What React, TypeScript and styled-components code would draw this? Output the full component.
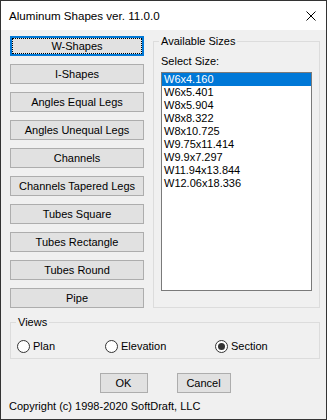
import React, { useState } from "react";
import styled, { createGlobalStyle } from "styled-components";

const GlobalStyle = createGlobalStyle`
  html, body {
    margin: 0;
    padding: 0;
    background: #ffffff;
  }
  * {
    box-sizing: border-box;
  }
`;

const SHAPES = [
  "W-Shapes",
  "I-Shapes",
  "Angles Equal Legs",
  "Angles Unequal Legs",
  "Channels",
  "Channels Tapered Legs",
  "Tubes Square",
  "Tubes Rectangle",
  "Tubes Round",
  "Pipe",
];

const SIZES = [
  "W6x4.160",
  "W6x5.401",
  "W8x5.904",
  "W8x8.322",
  "W8x10.725",
  "W9.75x11.414",
  "W9.9x7.297",
  "W11.94x13.844",
  "W12.06x18.336",
];

const VIEWS = [
  { label: "Plan", width: 88 },
  { label: "Elevation", width: 110 },
  { label: "Section", width: 80 },
];

const Window = styled.div`
  width: 327px;
  height: 420px;
  border: 1px solid #333333;
  display: flex;
  flex-direction: column;
  font-family: "Liberation Sans", Arial, sans-serif;
  font-size: 11px;
  line-height: 13px;
  color: #000000;
`;

const TitleBar = styled.div`
  height: 29px;
  background: #ffffff;
  display: flex;
  align-items: center;
  justify-content: space-between;
  padding: 0 10px 0 8px;
`;

const Title = styled.div`
  font-size: 11.6px;
  line-height: 16px;
  padding-top: 1px;
`;

const Body = styled.div`
  flex: 1;
  background: #f0f0f0;
  padding: 5px 6px 0 9px;
  display: flex;
  flex-direction: column;
`;

const Main = styled.div`
  display: flex;
  gap: 9px;
`;

const ButtonColumn = styled.div`
  width: 134px;
  padding-top: 1px;
  display: flex;
  flex-direction: column;
  gap: 8px;
`;

const WinButton = styled.button<{ $focused?: boolean; $width?: number }>`
  width: ${(p) => (p.$width ? `${p.$width}px` : "100%")};
  height: 20px;
  padding: 0;
  margin: 0;
  font-family: inherit;
  font-size: 11px;
  line-height: 13px;
  color: #000000;
  background: #e1e1e1;
  border: ${(p) => (p.$focused ? "2px solid #0078d7" : "1px solid #adadad")};
  outline: ${(p) => (p.$focused ? "1px dotted #000000" : "none")};
  outline-offset: -3px;
  cursor: default;
`;

const GroupBox = styled.fieldset`
  margin: 0;
  min-width: 0;
  border: 1px solid #dcdcdc;
  padding: 7px 7px 16px 7px;
`;

const ViewsGroup = styled(GroupBox)`
  margin-top: 8px;
  padding: 11px 7px 5px 7px;
`;

const Legend = styled.legend`
  margin-left: -2px;
  padding: 0 2px;
  font-size: 11px;
  line-height: 13px;
`;

const SizesGroup = styled(GroupBox)`
  width: 167px;
`;

const FieldLabel = styled.div`
  margin-bottom: 4px;
`;

const ListBox = styled.div`
  height: 219px;
  background: #ffffff;
  border: 1px solid #7a7a7a;
  display: flex;
  flex-direction: column;
`;

const ListItem = styled.div<{ $selected?: boolean }>`
  height: 13px;
  line-height: 13px;
  padding-left: 2px;
  white-space: nowrap;
  background: ${(p) => (p.$selected ? "#0078d7" : "transparent")};
  color: ${(p) => (p.$selected ? "#ffffff" : "#000000")};
`;

const RadioRow = styled.div`
  display: flex;
  margin-left: -1px;
  height: 13px;
`;

const RadioItem = styled.label<{ $width: number }>`
  width: ${(p) => p.$width}px;
  display: flex;
  align-items: center;
  gap: 3px;
`;

const RadioCircle = styled.span<{ $checked?: boolean }>`
  width: 13px;
  height: 13px;
  border-radius: 50%;
  border: 1px solid #333333;
  background: #ffffff;
  display: flex;
  align-items: center;
  justify-content: center;
  flex-shrink: 0;

  &::after {
    content: "";
    width: 7px;
    height: 7px;
    border-radius: 50%;
    background: ${(p) => (p.$checked ? "#333333" : "transparent")};
  }
`;

const Footer = styled.div`
  margin-top: 14px;
  display: flex;
  justify-content: center;
  gap: 29px;
`;

const Copyright = styled.div`
  margin-top: 7px;
  margin-left: -1px;
`;

const CloseIcon = () => (
  <svg width="10" height="10" viewBox="0 0 10 10">
    <path d="M0.5 0.5 L9.5 9.5 M9.5 0.5 L0.5 9.5" stroke="#000" strokeWidth="1" />
  </svg>
);

export default function App() {
  const [view, setView] = useState("Section");

  return (
    <>
      <GlobalStyle />
      <Window>
        <TitleBar>
          <Title>Aluminum Shapes ver. 11.0.0</Title>
          <CloseIcon />
        </TitleBar>
        <Body>
          <Main>
            <ButtonColumn>
              {SHAPES.map((s, i) => (
                <WinButton key={s} $focused={i === 0}>
                  {s}
                </WinButton>
              ))}
            </ButtonColumn>
            <SizesGroup>
              <Legend>Available Sizes</Legend>
              <FieldLabel>Select Size:</FieldLabel>
              <ListBox>
                {SIZES.map((s, i) => (
                  <ListItem key={s} $selected={i === 0}>
                    {s}
                  </ListItem>
                ))}
              </ListBox>
            </SizesGroup>
          </Main>
          <ViewsGroup>
            <Legend>Views</Legend>
            <RadioRow>
              {VIEWS.map((v) => (
                <RadioItem key={v.label} $width={v.width} onClick={() => setView(v.label)}>
                  <RadioCircle $checked={view === v.label} />
                  {v.label}
                </RadioItem>
              ))}
            </RadioRow>
          </ViewsGroup>
          <Footer>
            <WinButton $width={48}>OK</WinButton>
            <WinButton $width={54}>Cancel</WinButton>
          </Footer>
          <Copyright>Copyright (c) 1998-2020 SoftDraft, LLC</Copyright>
        </Body>
      </Window>
    </>
  );
}
